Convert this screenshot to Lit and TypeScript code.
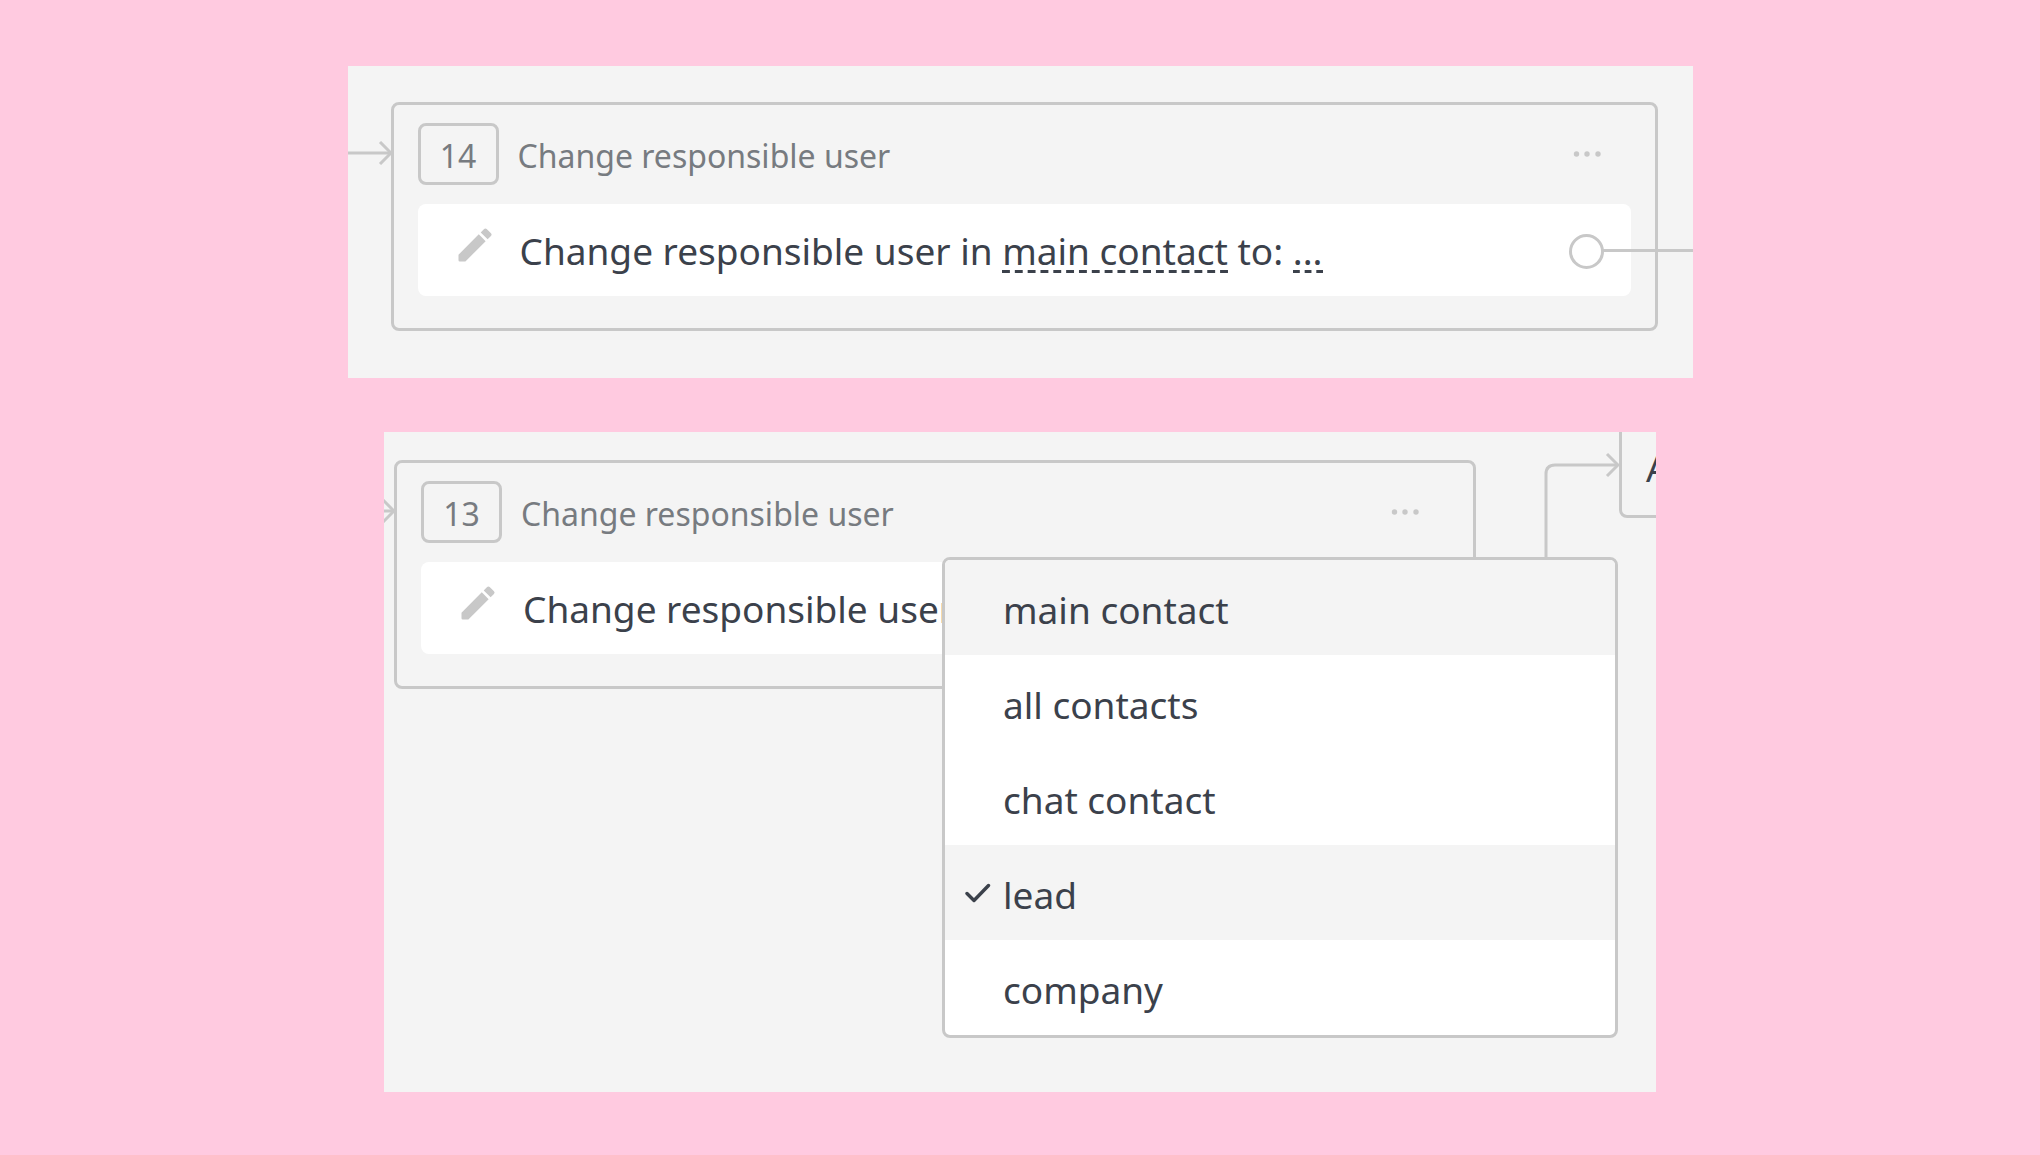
import { LitElement, html, css, svg, nothing } from "lit";
import { customElement, property } from "lit/decorators.js";

const arrowHead = svg`<path d="M1 1 L12 12 L1 23" />`;

@customElement("step-card")
class StepCard extends LitElement {
  @property({ type: Number }) number = 0;
  @property() heading = "";

  static styles = css`
    :host {
      display: block;
      box-sizing: border-box;
      position: relative;
      border: 3px solid #c8c8c8;
      border-radius: 8px;
      padding: 18px 24px 32px;
    }
    * {
      box-sizing: border-box;
    }
    button {
      font: inherit;
      color: inherit;
      background: none;
      border: 0;
      padding: 0;
      margin: 0;
      cursor: pointer;
    }
    .head {
      display: flex;
      align-items: center;
      gap: 19px;
      margin-bottom: 19px;
      color: #777b80;
      font-size: 32px;
      line-height: 44px;
    }
    .badge {
      display: flex;
      align-items: center;
      justify-content: center;
      width: 81px;
      height: 62px;
      padding-top: 4px;
      border: 3px solid #c8c8c8;
      border-radius: 8px;
    }
    h2 {
      flex: 1;
      margin: 0;
      padding-top: 4px;
      font: inherit;
      white-space: nowrap;
    }
    .more {
      display: flex;
      margin-right: 29px;
    }
    .more svg {
      width: 30px;
      height: 12px;
      fill: #c8c8c8;
    }
    .body {
      display: flex;
      align-items: center;
      height: 92px;
      padding: 2px 27px 0 35px;
      background: #fff;
      border-radius: 8px;
      color: #3b414b;
      font-size: 37px;
      line-height: 52px;
    }
    .edit {
      display: flex;
      align-self: flex-start;
      margin: 17px 23px 0 0;
    }
    .edit svg {
      width: 44px;
      height: 44px;
      fill: #c8c8c8;
    }
    .text {
      flex: 1;
      margin: 0;
      white-space: nowrap;
    }
    .port {
      position: relative;
      width: 35px;
      height: 35px;
      border: 3px solid #c8c8c8;
      border-radius: 50%;
    }
    .port::after {
      content: "";
      position: absolute;
      top: 12px;
      left: 31px;
      width: var(--wire, 90px);
      height: 3px;
      background: #c8c8c8;
    }
    .in {
      position: absolute;
      top: 36px;
      right: calc(100% + 2px);
      width: 44px;
      height: 24px;
      fill: none;
      stroke: #c8c8c8;
      stroke-width: 3;
    }
  `;

  render() {
    return html`
      <svg class="in" viewBox="0 0 44 24" aria-hidden="true">
        <path d="M0 12 H43" />
        <g transform="translate(31 0)">${arrowHead}</g>
      </svg>
      <div class="head">
        <span class="badge">${this.number}</span>
        <h2>${this.heading}</h2>
        <button class="more" aria-label="More">
          <svg viewBox="0 0 30 12">
            <circle cx="4.500" cy="6" r="2.700" />
            <circle cx="15" cy="6" r="2.700" />
            <circle cx="26" cy="6" r="2.700" />
          </svg>
        </button>
      </div>
      <div class="body">
        <button class="edit" aria-label="Edit">
          <svg viewBox="0 0 24 24">
            <path
              d="M3 17.25V20.3q0 .7.7.7H6.750L17.81 9.94l-3.75-3.75L3 17.25zM20.71 7.04a1 1 0 0 0 0-1.41l-2.34-2.34a1 1 0 0 0-1.41 0l-1.83 1.83 3.75 3.75 1.83-1.83z"
            />
          </svg>
        </button>
        <p class="text"><slot></slot></p>
        <span class="port"></span>
      </div>
    `;
  }
}

@customElement("option-menu")
class OptionMenu extends LitElement {
  @property({ attribute: false }) options: string[] = [];
  @property() selected = "";
  @property() active = "";

  static styles = css`
    :host {
      display: block;
      box-sizing: border-box;
      overflow: hidden;
      background: #fff;
      border: 3px solid #c8c8c8;
      border-radius: 8px;
    }
    .item {
      display: grid;
      grid-template-columns: 58px 1fr;
      align-items: center;
      width: 100%;
      height: 95px;
      margin: 0;
      padding: 4px 0 0;
      border: 0;
      background: none;
      color: #3b414b;
      font: inherit;
      font-size: 37px;
      line-height: 52px;
      text-align: left;
      cursor: pointer;
    }
    .shaded {
      background: #f4f4f4;
    }
    .label {
      grid-column: 2;
    }
    .tick {
      grid-row: 1;
      width: 26px;
      height: 20px;
      margin-left: 20px;
      margin-bottom: 4px;
      fill: none;
      stroke: #3b414b;
      stroke-width: 3.4;
      stroke-linecap: round;
      stroke-linejoin: round;
    }
  `;

  render() {
    return html`<div role="listbox" aria-label="Entity">
      ${this.options.map((name) => {
        const chosen = name === this.selected;
        return html`<button
          class="item ${chosen || name === this.active ? "shaded" : ""}"
          role="option"
          aria-selected=${chosen ? "true" : "false"}
        >
          ${chosen
            ? html`<svg class="tick" viewBox="0 0 26 20" aria-hidden="true">
                <path d="M2 10.500 L9 17.500 L23.500 2.500" />
              </svg>`
            : nothing}
          <span class="label">${name}</span>
        </button>`;
      })}
    </div>`;
  }
}

@customElement("app-root")
class AppRoot extends LitElement {
  static styles = css`
    :host {
      display: block;
      box-sizing: border-box;
      min-height: 100vh;
      background: #ffcae0;
      font-family: "Noto Sans", "Open Sans", sans-serif;
    }
    * {
      box-sizing: border-box;
    }
    main {
      display: flex;
      flex-direction: column;
      align-items: center;
      gap: 54px;
      padding: 66px 24px 63px;
    }
    .panel {
      position: relative;
      width: 100%;
      overflow: hidden;
      background: #f4f4f4;
    }
    .single {
      max-width: 1345px;
      padding: 36px 35px 47px 43px;
    }
    .open {
      display: grid;
      max-width: 1272px;
      padding: 28px 0 54px 10px;
    }
    .open step-card {
      --wire: 126px;
      grid-area: 1 / 1;
      align-self: start;
      margin-right: 180px;
    }
    .open option-menu {
      grid-area: 1 / 1;
      z-index: 1;
      margin: 97px 38px 0 548px;
    }
    .link {
      position: relative;
      overflow: hidden;
      margin: 0;
      padding: 0;
      border: 0;
      background: none;
      color: inherit;
      font: inherit;
      line-height: inherit;
      vertical-align: baseline;
      cursor: pointer;
    }
    .link::after {
      content: "";
      position: absolute;
      left: 0;
      right: -5px;
      bottom: 4px;
      height: 3px;
      background: linear-gradient(90deg, #3b414b 60%, transparent 60%) 0 0 / 13px 3px round;
    }
    .wire {
      position: absolute;
      top: 0;
      right: 36px;
      width: 80px;
      height: 142px;
      fill: none;
      stroke: #c8c8c8;
      stroke-width: 3;
    }
    .next {
      position: absolute;
      top: -60px;
      right: -200px;
      width: 237px;
      height: 146px;
      padding: 67px 24px 0;
      border: 3px solid #c8c8c8;
      border-radius: 8px;
      color: #3b414b;
      font-size: 37px;
      line-height: 52px;
    }
  `;

  private options = ["main contact", "all contacts", "chat contact", "lead", "company"];

  render() {
    return html`
      <main>
        <section class="panel single">
          <step-card number="14" heading="Change responsible user"
            >Change responsible user in <button class="link">main contact</button> to:
            <button class="link">...</button></step-card
          >
        </section>
        <section class="panel open">
          <step-card number="13" heading="Change responsible user">Change responsible user</step-card>
          <svg class="wire" viewBox="0 0 80 142" aria-hidden="true">
            <path d="M6 142 V42 Q6 33 15 33 H78" />
            <g transform="translate(66 21)">${arrowHead}</g>
          </svg>
          <div class="next">A</div>
          <option-menu .options=${this.options} selected="lead" active="main contact"></option-menu>
        </section>
      </main>
    `;
  }
}
